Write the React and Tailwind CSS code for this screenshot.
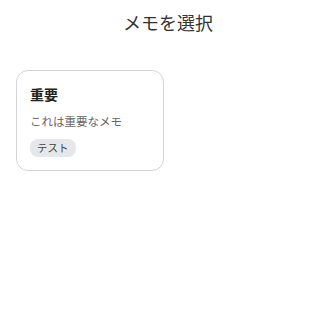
export default function App() {
  const memos = [{ id: 1, title: "重要", body: "これは重要なメモ", tags: ["テスト"] }];
  return (
    <div className="min-h-screen bg-white px-4" style={{ fontFamily: '"Noto Sans CJK JP", "Noto Sans", sans-serif' }}>
      <h1 className="pt-[10px] text-center text-[18px] leading-[24px] text-[#333333]">メモを選択</h1>
      <div className="mt-[36px] flex flex-wrap gap-3">
        {memos.map((m) => (
          <div key={m.id} className="w-[148px] rounded-xl border border-[#d4d4d8] px-[13px] pt-[13px] pb-[13px]">
            <h2 className="text-[14px] font-bold leading-[20px] text-[#222222]">{m.title}</h2>
            <p className="mt-[9px] text-[11.5px] leading-[16px] text-[#666666]">{m.body}</p>
            <div className="mt-[10px] flex gap-1">
              {m.tags.map((t) => (
                <span key={t} className="rounded-lg bg-[#e5e7eb] px-[7px] py-[2px] text-[10.5px] leading-[14px] text-[#444444]">{t}</span>
              ))}
            </div>
          </div>
        ))}
      </div>
    </div>
  );
}
